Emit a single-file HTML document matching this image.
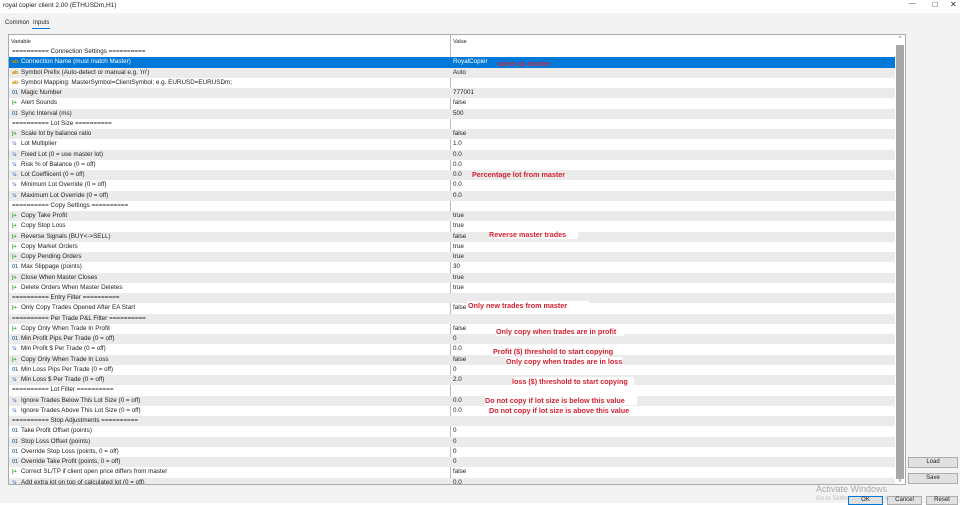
<!DOCTYPE html><html><head><style>
*{margin:0;padding:0;box-sizing:border-box}
body{width:960px;height:503px;background:#fff;font-family:"Liberation Sans",sans-serif;font-size:6.3px;color:#222;position:relative;overflow:hidden}
.a{position:absolute}
#rows{position:absolute;left:0;top:0;width:900px;height:484px;overflow:hidden}
.row{position:absolute;left:9px;width:886px;height:10.25px;line-height:10.25px;white-space:nowrap}
.row.g{background:#ebebeb}
.row.s{background:#0078d7;color:#fff}
.row span.v{position:absolute;left:444px}
.row span.n{position:absolute;left:3px}
.ic{display:inline-block;width:9px;font-size:5.5px;font-weight:bold}
.ab{color:#d08a00}.n1{color:#4a7aa0}.fl{color:#2a9a2a}.hf{color:#3a6ab0}
.ann{position:absolute;color:#d42030;font-weight:bold;font-size:7.2px;white-space:nowrap}
.btn{position:absolute;background:#e1e1e1;border:1px solid #adadad;font-size:6px;text-align:center}
</style></head><body>
<div class="a" style="left:3px;top:2px;font-size:6.5px">royal copier client 2.00 (ETHUSDm,H1)</div>
<div class="a" style="left:909px;top:0;font-size:7px;color:#555">—</div>
<div class="a" style="left:932px;top:1px;font-size:7px;color:#555">☐</div>
<div class="a" style="left:950px;top:0;font-size:8px;color:#333">✕</div>
<div class="a" style="left:0;top:13px;width:960px;height:490px;background:#f3f3f3"></div>
<div class="a" style="left:5px;top:20px;font-size:6px">Common</div>
<div class="a" style="left:33px;top:20px;font-size:6px">Inputs</div>
<div class="a" style="left:32px;top:28px;width:18px;height:1px;background:#0078d7"></div>
<div class="a" style="left:8px;top:34px;width:898px;height:451px;background:#fff;border:1px solid #aaa"></div>
<div class="a" style="left:11px;top:39px;font-size:5.5px">Variable</div>
<div class="a" style="left:453px;top:39px;font-size:5.5px">Value</div>
<div class="a" style="left:450px;top:35px;width:1px;height:449px;background:#bbb"></div>
<div id="rows"></div>
<div class="a" style="left:896px;top:36px;width:8px;height:8px;font-size:6px;color:#666;text-align:center">^</div>
<div class="a" style="left:896px;top:45px;width:8px;height:434px;background:#a8a8a8"></div>
<div class="a" style="left:896px;top:478px;width:8px;height:6px;font-size:5px;color:#666;text-align:center">v</div>
<div class="ann" style="left:497px;top:59px;color:#c03050">same as master</div>
<div class="ann" style="left:472px;top:170px">Percentage lot from master</div>
<div class="ann" style="left:489px;top:230px;background:#fff;padding-right:12px">Reverse master trades</div>
<div class="ann" style="left:468px;top:301px;background:#fff;padding-right:22px">Only new trades from master</div>
<div class="ann" style="left:496px;top:327px;background:#fff;padding-right:8px">Only copy when trades are in profit</div>
<div class="ann" style="left:493px;top:347px;background:#fff">Profit ($) threshold to start copying</div>
<div class="ann" style="left:506px;top:357px;background:#fff">Only copy when trades are in loss</div>
<div class="ann" style="left:512px;top:377px;background:#fff;padding-right:6px">loss ($) threshold to start copying</div>
<div class="ann" style="left:485px;top:396px;background:#fff;padding-right:12px">Do not copy if lot size is below this value</div>
<div class="ann" style="left:489px;top:406px;background:#fff;padding-right:6px">Do not copy if lot size is above this value</div>
<div class="btn" style="left:908px;top:457px;width:50px;height:11px;line-height:9px">Load</div>
<div class="btn" style="left:908px;top:473px;width:50px;height:11px;line-height:9px">Save</div>
<div class="a" style="left:816px;top:484px;font-size:9px;color:#aaa">Activate Windows</div>
<div class="a" style="left:816px;top:496px;font-size:6px;color:#bbb">Go to Settings to activate Windows.</div>
<div class="btn" style="left:848px;top:496px;width:35px;height:9px;line-height:7px;border-color:#0078d7">OK</div>
<div class="btn" style="left:887px;top:496px;width:35px;height:9px;line-height:7px">Cancel</div>
<div class="btn" style="left:926px;top:496px;width:32px;height:9px;line-height:7px">Reset</div>
<script>
var R=[["","========== Connection Settings ==========",""],["ab","Connection Name (must match Master)","RoyalCopier"],["ab","Symbol Prefix (Auto-detect or manual e.g. 'm')","Auto"],["ab","Symbol Mapping: MasterSymbol=ClientSymbol; e.g. EURUSD=EURUSDm;",""],["01","Magic Number","777001"],["fl","Alert Sounds","false"],["01","Sync Interval (ms)","500"],["","========== Lot Size ==========",""],["fl","Scale lot by balance ratio","false"],["hf","Lot Multiplier","1.0"],["hf","Fixed Lot (0 = use master lot)","0.0"],["hf","Risk % of Balance (0 = off)","0.0"],["hf","Lot Coeffiicent (0 = off)","0.0"],["hf","Minimum Lot Override (0 = off)","0.0"],["hf","Maximum Lot Override (0 = off)","0.0"],["","========== Copy Settings ==========",""],["fl","Copy Take Profit","true"],["fl","Copy Stop Loss","true"],["fl","Reverse Signals (BUY<->SELL)","false"],["fl","Copy Market Orders","true"],["fl","Copy Pending Orders","true"],["01","Max Slippage (points)","30"],["fl","Close When Master Closes","true"],["fl","Delete Orders When Master Deletes","true"],["","========== Entry Filter ==========",""],["fl","Only Copy Trades Opened After EA Start","false"],["","========== Per Trade P&L Filter ==========",""],["fl","Copy Only When Trade In Profit","false"],["01","Min Profit Pips Per Trade (0 = off)","0"],["hf","Min Profit $ Per Trade (0 = off)","0.0"],["fl","Copy Only When Trade In Loss","false"],["01","Min Loss Pips Per Trade (0 = off)","0"],["hf","Min Loss $ Per Trade (0 = off)","2.0"],["","========== Lot Filter ==========",""],["hf","Ignore Trades Below This Lot Size (0 = off)","0.0"],["hf","Ignore Trades Above This Lot Size (0 = off)","0.0"],["","========== Stop Adjustments ==========",""],["01","Take Profit Offset (points)","0"],["01","Stop Loss Offset (points)","0"],["01","Override Stop Loss (points, 0 = off)","0"],["01","Override Take Profit (points, 0 = off)","0"],["fl","Correct SL/TP if client open price differs from master","false"],["hf","Add extra lot on top of calculated lot (0 = off)","0.0"]];
var G={ab:"ab","01":"01",fl:"|+",hf:"½"},h="";
R.forEach(function(r,i){var t=47+i*10.25;var c=i==1?"row s":(i%2==0&&i>0?"row g":"row");
var nm=r[0]?'<span class="ic '+(r[0]=="01"?"n1":r[0])+'">'+G[r[0]]+'</span>'+r[1]:r[1];
h+='<div class="'+c+'" style="top:'+t+'px"><span class="n">'+nm+'</span><span class="v">'+r[2]+'</span></div>';});
document.getElementById("rows").innerHTML=h;
</script>
</body></html>
